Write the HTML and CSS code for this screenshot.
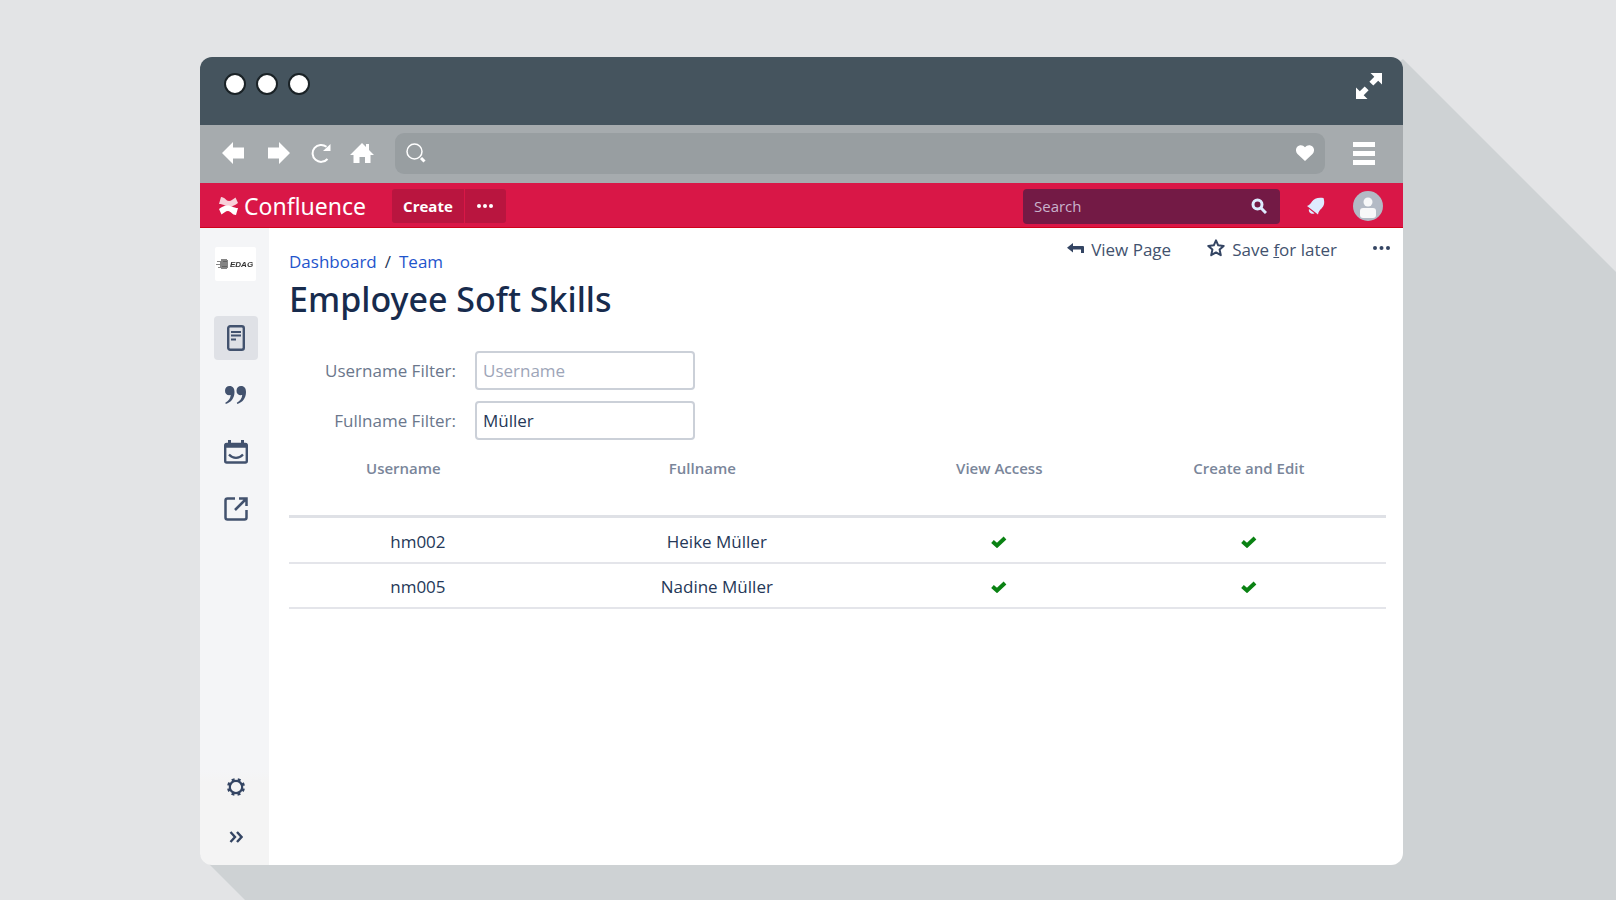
FILE: index.html
```
<!DOCTYPE html>
<html lang="en">
<head>
  <meta charset="UTF-8">
  <meta name="viewport" content="width=device-width, initial-scale=1.0">
  <title>Employee Soft Skills</title>
  <link rel="stylesheet" href="styles.css">
</head>
<body>
  <div class="window">
    <div class="titlebar">
      <div class="dots"><span></span><span></span><span></span></div>
      <svg width="26" height="26" viewBox="0 0 26 26" fill="#fff"><path d="M14.500 0H26v11.500l-3.800-3.800-4.900 4.900-3.900-3.900 4.900-4.900z"/><path d="M11.500 26H0V14.500l3.800 3.800 4.900-4.900 3.900 3.900-4.900 4.900z"/></svg>
    </div>

    <div class="toolbar">
      <button class="back" aria-label="Back"><svg width="22" height="22" viewBox="0 0 22 22"><path fill="#fff" d="M0 11L11 0v5.500h11v11H11V22z"/></svg></button>
      <button class="forward" aria-label="Forward"><svg width="22" height="22" viewBox="0 0 22 22"><path fill="#fff" d="M22 11L11 0v5.500H0v11h11V22z"/></svg></button>
      <button class="reload" aria-label="Reload"><svg width="20" height="20" viewBox="0 0 20 20"><path fill="none" stroke="#fff" stroke-width="2" d="M16.500 16A8.500 8.500 0 1 1 15.500 3.800"/><path fill="#fff" d="M19.500 1v7H12z"/></svg></button>
      <button class="home" aria-label="Home"><svg width="24" height="20" viewBox="0 0 24 20"><path fill="#fff" d="M12 0l4 4V1h3v6l5 5h-3.500v8H15v-6H9.500v6H3.500v-8H0z"/></svg></button>
      <div class="address">
        <svg width="20" height="20" viewBox="0 0 20 20" fill="none" stroke="#fff"><circle cx="8.500" cy="8.500" r="7.500" stroke-width="1.500"/><path stroke-width="3" d="M15 15l3.500 3.500"/></svg>
        <input type="text" aria-label="Address">
        <svg width="18" height="16" viewBox="0 0 18 16"><path fill="#fff" d="M9 16L1.500 9C-.5 7-.5 3.500 1.300 1.700 3.500-.5 7-.3 9 2.200c2-2.500 5.500-2.700 7.700-.5 1.800 1.800 1.800 5.300-.2 7.300z"/></svg>
      </div>
      <button class="menu" aria-label="Menu"><span></span><span></span><span></span></button>
    </div>

    <header class="header">
      <a class="brand" href="#">
        <svg width="19" height="18" viewBox="0 0 19 18" fill="#fff"><path opacity=".8" d="M2 0c4 0 5 4 8 4 2.500 0 4-2 6.500-3.500L19 6c-3 2-5 3.500-8.500 3.500C6 9.500 5 7 0 7z"/><path d="M17 18c-4 0-5-4-8-4-2.500 0-4 2-6.500 3.500L0 12c3-2 5-3.500 8.500-3.500C13 8.500 14 11 19 11z"/></svg>
        <span>Confluence</span>
      </a>
      <div class="buttons">
        <button class="create">Create</button>
        <button class="more" aria-label="More">
          <svg width="16" height="4" viewBox="0 0 16 4" fill="#fff"><circle cx="2" cy="2" r="2"/><circle cx="8" cy="2" r="2"/><circle cx="14" cy="2" r="2"/></svg>
        </button>
      </div>
      <div class="search">
        <input type="text" placeholder="Search" aria-label="Search">
        <svg width="16" height="16" viewBox="0 0 16 16" fill="none" stroke="#deebff" stroke-width="3"><circle cx="6.500" cy="6.500" r="4.500"/><path d="M10 10l5 5"/></svg>
      </div>
      <button class="bell" aria-label="Notifications"><svg width="18" height="18" viewBox="0 0 18 18" fill="#deebff"><path d="M16.500 1C11 0 7 1.500 5 4.500 3.500 7 2.500 8 0 9l11 8.500c.5-3 1.500-4 3.500-6C17.500 8.500 17.800 5 16.500 1z"/><path d="M2 12l5.500 4.200C5 18 1 15.500 2 12z"/></svg></button>
      <button class="avatar" aria-label="Profile"><svg width="30" height="30" viewBox="0 0 30 30"><circle cx="15" cy="15" r="15" fill="#b3bac5"/><circle cx="15" cy="11" r="4.500" fill="#f7f8f9"/><rect x="7" y="17" width="16" height="10" rx="3" fill="#f7f8f9"/></svg></button>
    </header>

    <div class="content">
      <nav class="sidebar">
        <a class="logo" href="#" aria-label="EDAG">
          <svg width="41" height="12" viewBox="0 0 41 12"><path fill="#858585" d="M6 1h6v1h1v8h-1v1H6v-1H3V9h2V7H1V6h4V4H2V3h4z"/><path fill="#666" d="M8 3h4v1H8zM7 8h5v1H7z"/><text x="15" y="9">EDAG</text></svg>
        </a>
        <a class="item active" href="#" aria-label="Pages">
          <svg width="18" height="26" viewBox="0 0 18 26" fill="none" stroke="#42526e"><rect x="1.200" y="1.200" width="15.600" height="23.600" rx="2" stroke-width="2.400"/><path stroke-width="2" d="M4 7h10M4 10.500h10M4 14.500h5"/></svg>
        </a>
        <a class="item" href="#" aria-label="Blog">
          <svg width="22" height="18" viewBox="0 0 22 18" fill="#42526e"><path d="M4.500 0C8 0 9.500 2.500 9.500 6 9.500 12 6 16.500.8 18l-.5-1.200C3.500 15 5.500 12.500 5.700 9 2.500 9.700 0 8 0 4.700 0 2 2 0 4.500 0z"/><path d="M16 0c3.500 0 5 2.500 5 6 0 6-3.500 10.500-8.700 12l-.5-1.200c3.200-1.800 5.200-4.300 5.400-7.800-3.200.7-5.700-1-5.700-4.300C11.500 2 13.500 0 16 0z"/></svg>
        </a>
        <a class="item" href="#" aria-label="Calendar">
          <svg width="24" height="24" viewBox="0 0 24 24" fill="none" stroke="#42526e"><rect x="1.200" y="4" width="21.600" height="18.500" rx="1.500" stroke-width="2.400"/><path stroke-width="4.500" d="M1 5.500h22"/><path stroke-width="3" d="M5.500 0v5M18.500 0v5"/><path stroke-width="2.200" d="M5 14.500c4 4.500 10 4.500 14 0"/></svg>
        </a>
        <a class="item" href="#" aria-label="Shortcut">
          <svg width="24" height="24" viewBox="0 0 24 24" fill="none" stroke="#42526e" stroke-width="2.500"><path d="M11 1.500H3.500q-2 0-2 2v17q0 2 2 2h17q2 0 2-2V13M15 1.500h7.500V9M22 2L11 13"/></svg>
        </a>
        <a class="item bottom" href="#" aria-label="Settings">
          <svg width="18" height="18" viewBox="0 0 18 18" fill="none" stroke="#344563"><circle cx="9" cy="9" r="6.200" stroke-width="2.200"/><circle cx="9" cy="9" r="7.800" stroke-width="2.400" stroke-dasharray="3 3.126" stroke-dashoffset="-1.500"/></svg>
        </a>
        <a class="item last" href="#" aria-label="Expand sidebar">
          <svg width="14" height="12" viewBox="0 0 14 12" fill="none" stroke="#344563" stroke-width="2.400"><path d="M1.500 1l4.500 5-4.500 5M8 1l4.500 5L8 11"/></svg>
        </a>
      </nav>

      <main class="page">
        <div class="top">
          <div class="breadcrumb"><a href="#">Dashboard</a><span>/</span><a href="#">Team</a></div>
          <div class="actions">
            <a href="#"><svg width="17" height="10" viewBox="0 0 17 10" fill="#344563"><path d="M0 4.700L6 0v3h10q1 0 1 1v6h-3V6.500H6v3z"/></svg>View Page</a>
            <a href="#"><svg width="18" height="18" viewBox="0 0 18 18"><path fill="none" stroke="#344563" stroke-width="2" stroke-linejoin="round" d="M9 1.300l2.200 5 5.500.6-4.100 3.700 1.200 5.600L9 13.400l-4.800 2.800 1.200-5.600L1.300 6.900l5.500-.6z"/></svg><span>Save <u>f</u>or later</span></a>
            <button aria-label="More actions"><svg width="17" height="4" viewBox="0 0 17 4" fill="#344563"><circle cx="2" cy="2" r="2"/><circle cx="8.500" cy="2" r="2"/><circle cx="15" cy="2" r="2"/></svg></button>
          </div>
        </div>
        <h1>Employee Soft Skills</h1>

        <form class="filters">
          <label for="username">Username Filter:</label>
          <input id="username" type="text" placeholder="Username">
          <label for="fullname">Fullname Filter:</label>
          <input id="fullname" type="text" value="Müller">
        </form>

        <table>
          <thead>
            <tr>
              <th class="name">Username</th>
              <th class="name full">Fullname</th>
              <th class="view">View Access</th>
              <th>Create and Edit</th>
            </tr>
          </thead>
          <tbody>
            <tr>
              <td>hm002</td>
              <td>Heike Müller</td>
              <td><svg width="16" height="12" viewBox="0 0 16 12"><path d="M1.500 5.500l4.500 4 8-7.500"/></svg></td>
              <td><svg width="16" height="12" viewBox="0 0 16 12"><path d="M1.500 5.500l4.500 4 8-7.500"/></svg></td>
            </tr>
            <tr>
              <td>nm005</td>
              <td>Nadine Müller</td>
              <td><svg width="16" height="12" viewBox="0 0 16 12"><path d="M1.500 5.500l4.500 4 8-7.500"/></svg></td>
              <td><svg width="16" height="12" viewBox="0 0 16 12"><path d="M1.500 5.500l4.500 4 8-7.500"/></svg></td>
            </tr>
          </tbody>
        </table>
      </main>
    </div>
  </div>
</body>
</html>
```

FILE: styles.css
```
*{
  box-sizing: border-box;
}
body{
  display: flex;
  margin: 0;
  min-height: 100vh;
  padding: 57px 213px 35px 200px;
  background: #e3e4e6;
  color: #253858;
  font-family: "Open Sans", "Noto Sans", sans-serif;
  font-size: 17px;
  line-height: 24px;
}
/* long flat shadow */
body::before{
  content: "";
  position: fixed;
  z-index: -1;
  inset: 0;
  background: #ced2d4;
  clip-path: polygon(calc(100% - 213px) 59px, 100% 272px, 100% 100%, 245px 100%, 200px calc(100% - 45px));
}
a{
  color: inherit;
  text-decoration: none;
}
button{
  padding: 0;
  border: 0;
  background: none;
  font: inherit;
}
input{
  min-width: 0;
  font: inherit;
}
svg{
  display: block;
  flex: none;
}
.window{
  display: flex;
  flex-direction: column;
  flex: 1;
}

.titlebar{
  display: flex;
  justify-content: space-between;
  height: 68px;
  padding: 16px 21px 0 24px;
  border-radius: 12px 12px 0 0;
  background: #45545e;
}
.dots{
  display: flex;
  gap: 10px;
}
.dots span{
  width: 22px;
  height: 22px;
  border: 2px solid #1a2226;
  border-radius: 50%;
  background: #fff;
}

.toolbar{
  display: flex;
  align-items: center;
  height: 58px;
  padding: 0 28px 2px 22px;
  background: #a6abae;
}
.back{
  margin-right: 24px;
}
.forward{
  margin-right: 21px;
}
.reload{
  margin-right: 19px;
}
.home{
  margin-right: 21px;
}
.address{
  display: flex;
  align-items: center;
  flex: 1;
  height: 41px;
  margin-right: 28px;
  padding: 0 11px;
  border-radius: 9px;
  background: #989ea1;
}
.address input{
  flex: 1;
  border: 0;
  background: none;
  color: #fff;
}
.menu{
  display: grid;
  gap: 4px;
  width: 22px;
}
.menu span{
  height: 5px;
  background: #fff;
}

.header{
  display: flex;
  align-items: center;
  height: 45px;
  padding: 2px 20px 0 19px;
  border-bottom: 1px solid #d0021b;
  background: #d91747;
}
.brand{
  display: flex;
  align-items: center;
  gap: 6px;
  color: #fff;
  font-family: "Noto Sans", sans-serif;
  font-size: 23px;
}
.buttons{
  display: flex;
  gap: 1px;
  margin-left: 26px;
}
.buttons button{
  display: flex;
  align-items: center;
  justify-content: center;
  width: 41px;
  height: 34px;
  border-radius: 0 3px 3px 0;
  background: #b9153f;
  color: #fff;
  font-size: 15px;
  font-weight: 700;
}
.buttons .create{
  width: 72px;
  border-radius: 3px 0 0 3px;
}
.search{
  display: flex;
  align-items: center;
  width: 257px;
  height: 35px;
  margin-left: auto;
  padding: 0 13px 0 11px;
  border-radius: 4px;
  background: #731a45;
}
.search input{
  flex: 1;
  padding: 0;
  border: 0;
  background: none;
  color: #fff;
  font-size: 15px;
  font-weight: 500;
}
.search input::placeholder{
  color: #c9b3cc;
}
.bell{
  margin: 0 28px 0 27px;
}

.content{
  display: flex;
  flex: 1;
}
.sidebar{
  display: flex;
  flex-direction: column;
  gap: 13px;
  width: 69px;
  padding: 19px 0 6px 14px;
  border-radius: 0 0 0 12px;
  background: linear-gradient(#f4f5f7 85%, #f4f4f4 87%);
}
.logo{
  display: flex;
  align-items: center;
  width: 41px;
  height: 34px;
  margin: 0 0 22px 1px;
  border-radius: 2px;
  background: #fff;
}
.logo text{
  fill: #333;
  font: italic bold 8px "Liberation Sans", sans-serif;
}
.item{
  display: flex;
  align-items: center;
  justify-content: center;
  width: 44px;
  height: 44px;
  border-radius: 4px;
}
.item.active{
  background: #dfe1e6;
}
.item.bottom{
  margin-top: auto;
}
.item.last{
  margin-top: -7px;
}

.page{
  flex: 1;
  padding: 10px 17px 0 20px;
  border-radius: 0 0 12px 0;
  background: #fff;
}
.top{
  display: flex;
  align-items: flex-start;
  justify-content: space-between;
}
.breadcrumb{
  display: flex;
  gap: 8px;
  padding-top: 12px;
}
.breadcrumb a{
  color: #1f55cc;
}
.actions{
  display: flex;
  align-items: center;
  margin-right: -4px;
  gap: 36px;
  color: #42526e;
}
.actions a{
  display: flex;
  align-items: center;
  gap: 7px;
}
.actions svg{
  margin-bottom: 4px;
}
h1{
  margin: 3px 0 30px;
  color: #172b4d;
  font-family: "Noto Sans", sans-serif;
  font-size: 34px;
  font-weight: 500;
  line-height: 44px;
}
.filters{
  display: grid;
  grid-template-columns: 167px 220px;
  gap: 11px 19px;
  align-items: center;
}
.filters label{
  color: #6b778c;
  text-align: right;
}
.filters input{
  height: 39px;
  padding: 0 6px;
  border: 2px solid #cbd0d8;
  border-radius: 4px;
  background: #fff;
  color: #253858;
}
.filters input::placeholder{
  color: #9da5b8;
}

table{
  width: 100%;
  border-collapse: collapse;
  table-layout: fixed;
  text-align: center;
}
th{
  height: 76px;
  padding: 16px 0 0;
  border-bottom: 3px solid #dfe1e6;
  color: #7a869a;
  font-size: 15px;
  font-weight: 600;
  vertical-align: top;
}
th.name{
  width: 23.5%;
  padding-right: 29px;
}
th.full{
  width: 31%;
}
th.view{
  width: 20.5%;
}
td{
  height: 45px;
  padding: 2px 0 0;
  border-bottom: 2px solid #e4e5ea;
}
tbody tr:first-child td{
  height: 47px;
  padding-top: 4px;
}
td svg{
  margin: 0 auto;
  fill: none;
  stroke: #0a8213;
  stroke-width: 4;
}
```
